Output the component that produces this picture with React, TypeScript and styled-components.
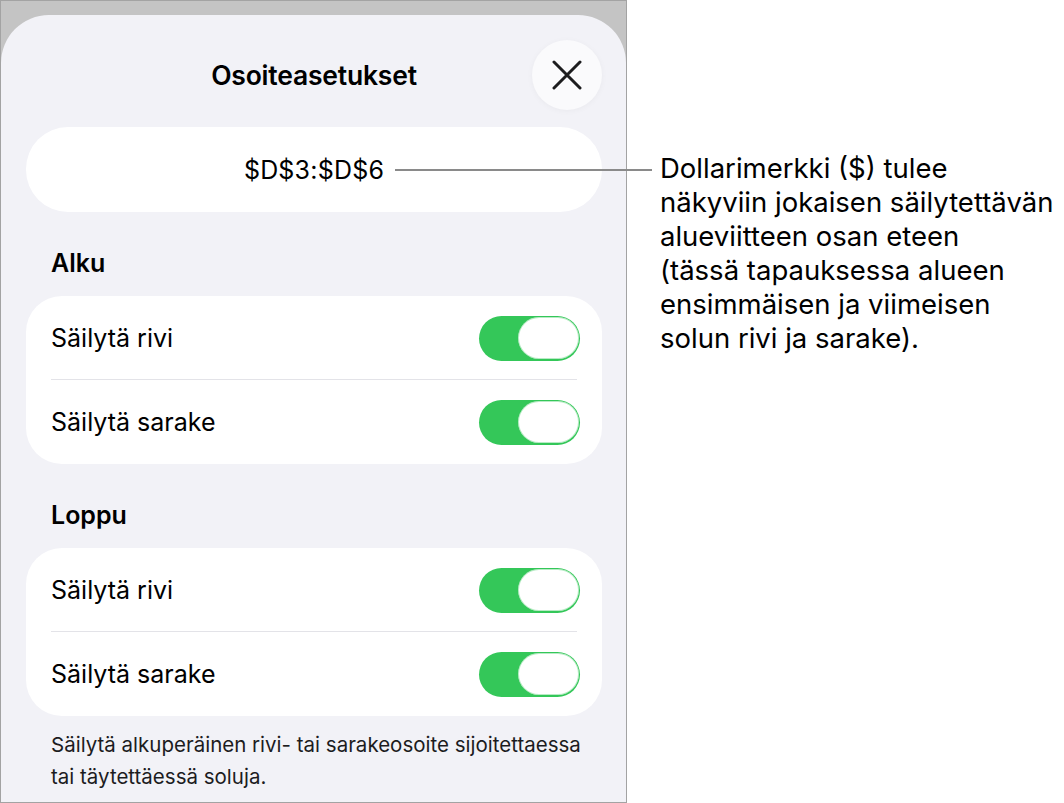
import React, { useState } from 'react';
import styled, { createGlobalStyle } from 'styled-components';

const GlobalStyle = createGlobalStyle`
  html, body {
    margin: 0;
    padding: 0;
    background: #ffffff;
  }
  body {
    font-family: Inter, "Noto Sans", "Liberation Sans", sans-serif;
    color: #000;
  }
`;

const Page = styled.div`
  position: relative;
  display: flex;
  width: 1064px;
  height: 803px;
  overflow: hidden;
`;

const Frame = styled.div`
  box-sizing: border-box;
  width: 627px;
  height: 803px;
  flex-shrink: 0;
  border: 1.5px solid #a3a3a3;
  background: #c4c4c4;
  padding-top: 14px;
  display: flex;
  flex-direction: column;
`;

const Sheet = styled.div`
  flex: 1;
  background: #f2f2f7;
  border-radius: 48px 48px 0 0;
  padding: 0 24px 0 25px;
  display: flex;
  flex-direction: column;
`;

const Header = styled.div`
  display: grid;
  grid-template-columns: 70px 1fr 70px;
  align-items: center;
  height: 70px;
  margin-top: 25px;
`;

const Title = styled.h1`
  grid-column: 2;
  margin: 0;
  text-align: center;
  font-size: 26.5px;
  font-weight: 600;
  letter-spacing: -0.2px;
`;

const CloseButton = styled.button`
  grid-column: 3;
  width: 70px;
  height: 70px;
  border: none;
  border-radius: 50%;
  background: #fafafc;
  box-shadow: 0 1px 6px rgba(0, 0, 0, 0.04);
  display: flex;
  align-items: center;
  justify-content: center;
  padding: 0;
  cursor: pointer;
`;

const Field = styled.div`
  margin-top: 17px;
  height: 85px;
  border-radius: 42px;
  background: #ffffff;
  display: flex;
  align-items: center;
  justify-content: center;
  font-size: 25px;
  letter-spacing: 0.2px;
`;

const SectionLabel = styled.h2`
  margin: 0;
  padding: 36px 25px 18px;
  font-size: 25px;
  line-height: 30px;
  font-weight: 600;
`;

const Group = styled.div`
  background: #ffffff;
  border-radius: 36px;
  display: flex;
  flex-direction: column;
`;

const Row = styled.div<{ $divider?: boolean }>`
  height: 84px;
  padding: 0 22px 0 25px;
  display: flex;
  align-items: center;
  justify-content: space-between;
  font-size: 25px;
  position: relative;
  ${(p) =>
    p.$divider &&
    `
    &::after {
      content: '';
      position: absolute;
      left: 25px;
      right: 25px;
      bottom: 0;
      height: 1.5px;
      background: #e3e3e8;
    }
  `}
`;

const Track = styled.button<{ $on: boolean }>`
  box-sizing: border-box;
  width: 101px;
  height: 45px;
  border: none;
  border-radius: 23px;
  padding: 1.5px;
  background: ${(p) => (p.$on ? '#34c759' : '#e9e9eb')};
  display: flex;
  justify-content: ${(p) => (p.$on ? 'flex-end' : 'flex-start')};
  cursor: pointer;
`;

const Knob = styled.span`
  width: 61px;
  height: 42px;
  border-radius: 21px;
  background: #ffffff;
  box-shadow: inset 0 0 0 1px rgba(52, 199, 89, 0.35);
`;

const Footnote = styled.p`
  margin: 13px 0 0;
  padding: 0 25px;
  font-size: 20.5px;
  line-height: 32px;
  color: #1c1c1e;
  white-space: nowrap;
`;

const Callout = styled.div`
  padding: 151px 0 0 33px;
  font-size: 27.5px;
  line-height: 34px;
  white-space: nowrap;
`;

const Leader = styled.div`
  position: absolute;
  left: 395px;
  top: 169px;
  width: 257px;
  height: 2px;
  background: #8a8a8a;
`;

function Toggle() {
  const [on, setOn] = useState(true);
  return (
    <Track $on={on} onClick={() => setOn(!on)}>
      <Knob />
    </Track>
  );
}

function CloseIcon() {
  return (
    <svg width="30" height="30" viewBox="0 0 30 30">
      <path
        d="M2 2 L28 28 M28 2 L2 28"
        stroke="#1c1c1e"
        strokeWidth="3"
        strokeLinecap="round"
      />
    </svg>
  );
}

function ToggleGroup() {
  return (
    <Group>
      <Row $divider>
        Säilytä rivi
        <Toggle />
      </Row>
      <Row>
        Säilytä sarake
        <Toggle />
      </Row>
    </Group>
  );
}

export default function App() {
  return (
    <Page>
      <GlobalStyle />
      <Frame>
        <Sheet>
          <Header>
            <Title>Osoiteasetukset</Title>
            <CloseButton aria-label="Sulje">
              <CloseIcon />
            </CloseButton>
          </Header>
          <Field>$D$3:$D$6</Field>
          <SectionLabel>Alku</SectionLabel>
          <ToggleGroup />
          <SectionLabel>Loppu</SectionLabel>
          <ToggleGroup />
          <Footnote>
            Säilytä alkuperäinen rivi- tai sarakeosoite sijoitettaessa
            <br />
            tai täytettäessä soluja.
          </Footnote>
        </Sheet>
      </Frame>
      <Callout>
        Dollarimerkki ($) tulee
        <br />
        näkyviin jokaisen säilytettävän
        <br />
        alueviitteen osan eteen
        <br />
        (tässä tapauksessa alueen
        <br />
        ensimmäisen ja viimeisen
        <br />
        solun rivi ja sarake).
      </Callout>
      <Leader />
    </Page>
  );
}
